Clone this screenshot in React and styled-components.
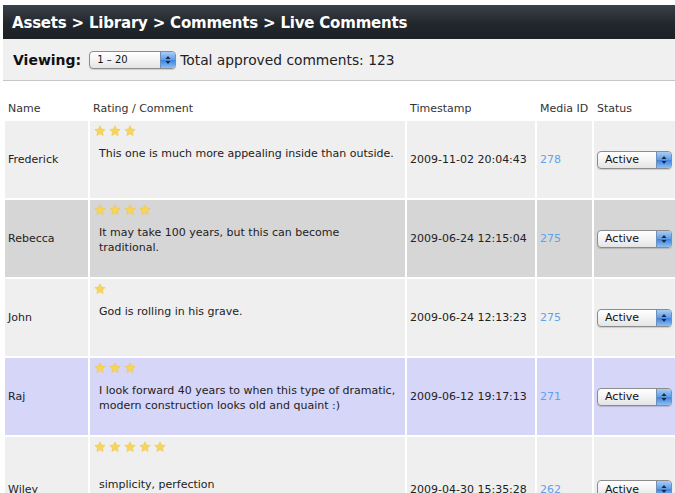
import React from 'react';
import styled, { createGlobalStyle } from 'styled-components';

const GlobalStyle = createGlobalStyle`
  html, body {
    margin: 0;
    padding: 0;
    background: #ffffff;
    overflow: hidden;
  }
  body {
    font-family: "DejaVu Sans", Verdana, sans-serif;
  }
`;

const comments = [
  {
    name: 'Frederick',
    stars: 3,
    text: 'This one is much more appealing inside than outside.',
    time: '2009-11-02 20:04:43',
    media: 278,
    tone: 'light',
  },
  {
    name: 'Rebecca',
    stars: 4,
    text: 'It may take 100 years, but this can become traditional.',
    time: '2009-06-24 12:15:04',
    media: 275,
    tone: 'gray',
  },
  {
    name: 'John',
    stars: 1,
    text: 'God is rolling in his grave.',
    time: '2009-06-24 12:13:23',
    media: 275,
    tone: 'light',
  },
  {
    name: 'Raj',
    stars: 3,
    text: 'I look forward 40 years to when this type of dramatic, modern construction looks old and quaint :)',
    time: '2009-06-12 19:17:13',
    media: 271,
    tone: 'blue',
  },
  {
    name: 'Wiley',
    stars: 5,
    text: 'simplicity, perfection',
    time: '2009-04-30 15:35:28',
    media: 262,
    tone: 'light',
    lead: true,
  },
];

const tones = {
  light: '#efefef',
  gray: '#d6d6d6',
  blue: '#d6d6f9',
};

const Page = styled.div`
  width: 700px;
  padding: 5px 0 0 3px;
`;

const TitleBar = styled.div`
  height: 34px;
  display: flex;
  align-items: center;
  padding-left: 9px;
  background: linear-gradient(#3b4149, #22272d 55%, #1c2126);
  color: #ffffff;
  font-family: "DejaVu Sans", Verdana, sans-serif;
  font-weight: bold;
  font-size: 15px;
  letter-spacing: -0.2px;
  padding-top: 1px;
  box-sizing: border-box;
`;

const Toolbar = styled.div`
  height: 41px;
  display: flex;
  align-items: center;
  gap: 6px;
  padding-left: 10px;
  background: #f0f0f0;
  border-bottom: 1px solid #c6c6c6;
  font-size: 14px;
  color: #111;
`;

const Label = styled.span`
  font-weight: bold;
  margin-right: 2px;
`;

const Total = styled.span`
  font-size: 13.8px;
  color: #222;
  margin-left: -2px;
`;

const SelectBox = styled.div`
  position: relative;
  box-sizing: border-box;
  width: ${({ $w }) => $w}px;
  height: 18px;
  border: 1px solid #8c8c8c;
  border-radius: 4px;
  background: linear-gradient(#ffffff, #f3f3f3 50%, #e4e4e4);
  box-shadow: 0 1px 1px rgba(0, 0, 0, 0.15);
  display: flex;
  align-items: center;
  padding-left: ${({ $pad }) => $pad}px;
  font-size: ${({ $fs }) => $fs}px;
  color: #111;
  overflow: hidden;
`;

const SelectArrow = styled.div`
  position: absolute;
  top: 0;
  right: 0;
  bottom: 0;
  width: 14px;
  border-left: 1px solid #6f8fb8;
  background: linear-gradient(#a9cdf5, #5c9be6 50%, #3e82df 51%, #8cc0f3);
  display: flex;
  align-items: center;
  justify-content: center;
`;

const Select = ({ value, width, pad = 7, fs = 10 }) => (
  <SelectBox $w={width} $pad={pad} $fs={fs}>
    {value}
    <SelectArrow>
      <svg width="6" height="10" viewBox="0 0 6 10">
        <path d="M3 1 L5.5 4 H0.5 Z M3 9 L5.5 6 H0.5 Z" fill="#1a2a40" />
      </svg>
    </SelectArrow>
  </SelectBox>
);

const Table = styled.table`
  margin-top: 14px;
  border-collapse: separate;
  border-spacing: 2px;
  font-size: 11px;
  color: #222;
  table-layout: fixed;
`;

const Th = styled.th`
  text-align: left;
  font-weight: normal;
  color: #333;
  padding: 5px 3px 4px;
  width: ${({ $w }) => $w}px;
`;

const Row = styled.tr`
  background: ${({ $tone }) => tones[$tone]};
`;

const Td = styled.td`
  padding: 0 3px;
  height: ${({ $tall }) => ($tall ? 104 : 77)}px;
  vertical-align: middle;
  white-space: nowrap;
`;

const CommentCell = styled.td`
  padding: 4px 3px 6px;
  vertical-align: top;
`;

const Stars = styled.div`
  display: flex;
  gap: 3px;
  padding-left: 1px;
  height: 12px;
`;

const CommentText = styled.p`
  margin: ${({ $lead }) => ($lead ? 24 : 9)}px 0 0 6px;
  line-height: 15px;
`;

const MediaLink = styled.a`
  color: #5da3ec;
  text-decoration: none;
`;

const Star = () => (
  <svg width="12" height="12" viewBox="0 0 24 24">
    <path
      d="M12 1.5l3.1 6.6 7.2.9-5.3 5 1.4 7.2L12 17.7l-6.4 3.5 1.4-7.2-5.3-5 7.2-.9z"
      fill="#f6d55a"
      stroke="#ecc544"
      strokeWidth="1"
    />
  </svg>
);

export default function App() {
  return (
    <Page>
      <GlobalStyle />
      <TitleBar>Assets &gt; Library &gt; Comments &gt; Live Comments</TitleBar>
      <Toolbar>
        <Label>Viewing:</Label>
        <Select value="1 – 20" width={87} />
        <Total>Total approved comments: 123</Total>
      </Toolbar>
      <Table>
        <thead>
          <tr>
            <Th $w={77}>Name</Th>
            <Th $w={309}>Rating / Comment</Th>
            <Th $w={122}>Timestamp</Th>
            <Th $w={49}>Media ID</Th>
            <Th $w={86}>Status</Th>
          </tr>
        </thead>
        <tbody>
          {comments.map((c) => (
            <Row key={c.name} $tone={c.tone}>
              <Td $tall={c.lead}>{c.name}</Td>
              <CommentCell>
                <Stars>
                  {Array.from({ length: c.stars }).map((_, i) => (
                    <Star key={i} />
                  ))}
                </Stars>
                <CommentText $lead={c.lead}>{c.text}</CommentText>
              </CommentCell>
              <Td>{c.time}</Td>
              <Td>
                <MediaLink href="#">{c.media}</MediaLink>
              </Td>
              <Td>
                <Select value="Active" width={75} pad={7} fs={11} />
              </Td>
            </Row>
          ))}
        </tbody>
      </Table>
    </Page>
  );
}
